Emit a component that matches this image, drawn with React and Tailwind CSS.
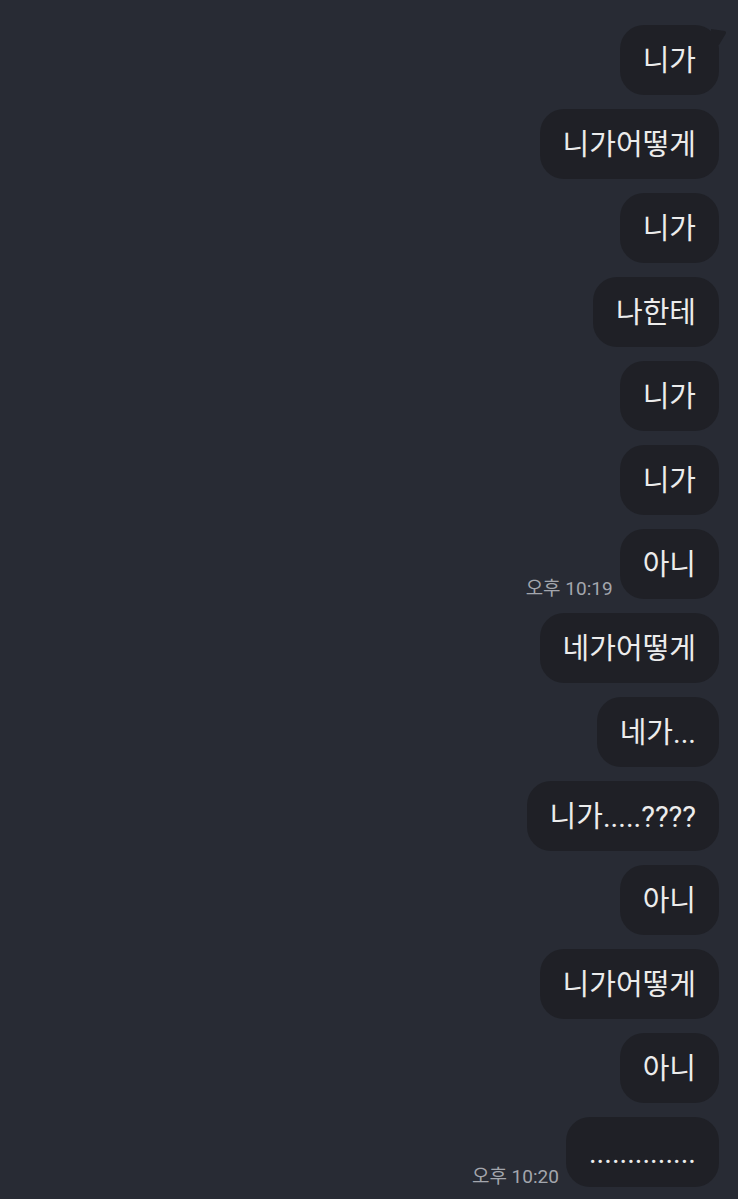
import React from "react";

const messages = [
  { text: "니가", tail: true },
  { text: "니가어떻게" },
  { text: "니가" },
  { text: "나한테" },
  { text: "니가" },
  { text: "니가" },
  { text: "아니", time: "오후 10:19" },
  { text: "네가어떻게" },
  { text: "네가..." },
  { text: "니가.....????" },
  { text: "아니" },
  { text: "니가어떻게" },
  { text: "아니" },
  { text: "..............", time: "오후 10:20" },
];

function Bubble({ text, tail, time }) {
  return (
    <div className="flex items-end justify-end gap-[7px]">
      {time && (
        <span className="pb-[1px] text-[19px] leading-none text-[#a3a6ad]">{time}</span>
      )}
      <div className="relative flex h-[70px] items-center rounded-[24px] bg-[#1f2026] px-[23px] pt-[4px] text-[29px] text-[#ececec]">
        {text}
        {tail && (
          <svg
            className="absolute -right-[8px] top-[4px]"
            width="16"
            height="16"
            viewBox="0 0 16 16"
          >
            <path d="M0 0 L14 2 Q16 3 14 6 L8 16 L0 16 Z" fill="#1f2026" />
          </svg>
        )}
      </div>
    </div>
  );
}

export default function App() {
  return (
    <div
      className="min-h-[1199px] w-full bg-[#282b34] pt-[25px] pr-[19px]"
      style={{ fontFamily: 'Roboto, "Noto Sans CJK KR", sans-serif' }}
    >
      <div className="flex flex-col gap-[14px]">
        {messages.map((m, i) => (
          <Bubble key={i} {...m} />
        ))}
      </div>
    </div>
  );
}
